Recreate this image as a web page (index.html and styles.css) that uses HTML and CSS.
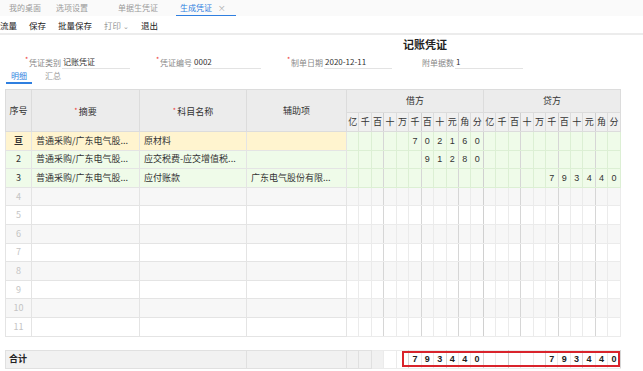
FILE: index.html
```html
<!DOCTYPE html>
<html lang="zh-CN">
<head>
    <meta charset="UTF-8">
    <title>生成凭证</title>
    <link rel="stylesheet" href="styles.css">
</head>
<body>
    <!-- 顶部页签 -->
    <div class="tabs">
        <span class="tab">我的桌面</span>
        <span class="tab">选项设置</span>
        <span class="tab">单据生凭证</span>
        <span class="tab active">生成凭证 <span class="close">×</span></span>
    </div>
    <div class="toolbar">
        <span>流量</span>
        <span>保存</span>
        <span>批量保存</span>
        <span class="disabled">打印 <span class="caret">⌄</span></span>
        <span>退出</span>
    </div>

    <div class="voucher-title">记账凭证</div>

    <div class="form-row">
        <div class="field"><span class="req">*</span><span class="label">凭证类别</span><span class="input">记账凭证</span></div>
        <div class="field"><span class="req">*</span><span class="label">凭证编号</span><span class="input">0002</span></div>
        <div class="field"><span class="req">*</span><span class="label">制单日期</span><span class="input">2020-12-11</span></div>
        <div class="field"><span class="req"></span><span class="label">附单据数</span><span class="input">1</span></div>
    </div>

    <div class="subtabs">
        <span class="subtab active">明细</span>
        <span class="subtab">汇总</span>
    </div>

    <table class="grid">
        <colgroup>
            <col class="c-seq"><col class="c-sum"><col class="c-acc"><col class="c-aux">
            <col span="22" class="c-d">
        </colgroup>
        <thead>
            <tr class="h1">
                <th rowspan="2">序号</th>
                <th rowspan="2"><span class="req">*</span>摘要</th>
                <th rowspan="2"><span class="req">*</span>科目名称</th>
                <th rowspan="2">辅助项</th>
                <th colspan="11" class="side">借方</th>
                <th colspan="11">贷方</th>
            </tr>
            <tr class="h2">
                <th>亿</th><th>千</th><th>百</th><th>十</th><th>万</th><th>千</th><th>百</th><th>十</th><th>元</th><th>角</th><th>分</th>
                <th>亿</th><th>千</th><th>百</th><th>十</th><th>万</th><th>千</th><th>百</th><th>十</th><th>元</th><th>角</th><th>分</th>
            </tr>
        </thead>
        <tbody>
            <tr class="cur">
                <td class="seq"><b>亘</b></td><td>普通采购/广东电气股...</td><td>原材料</td><td></td>
                <td></td><td></td><td></td><td></td><td></td><td>7</td><td>0</td><td>2</td><td>1</td><td>6</td><td>0</td>
                <td></td><td></td><td></td><td></td><td></td><td></td><td></td><td></td><td></td><td></td><td></td>
            </tr>
            <tr class="ok">
                <td class="seq">2</td><td>普通采购/广东电气股...</td><td>应交税费-应交增值税...</td><td></td>
                <td></td><td></td><td></td><td></td><td></td><td></td><td>9</td><td>1</td><td>2</td><td>8</td><td>0</td>
                <td></td><td></td><td></td><td></td><td></td><td></td><td></td><td></td><td></td><td></td><td></td>
            </tr>
            <tr class="ok">
                <td class="seq">3</td><td>普通采购/广东电气股...</td><td>应付账款</td><td>广东电气股份有限...</td>
                <td></td><td></td><td></td><td></td><td></td><td></td><td></td><td></td><td></td><td></td><td></td>
                <td></td><td></td><td></td><td></td><td></td><td>7</td><td>9</td><td>3</td><td>4</td><td>4</td><td>0</td>
            </tr>
            <tr class="empty odd"><td class="seq">4</td><td></td><td></td><td></td><td></td><td></td><td></td><td></td><td></td><td></td><td></td><td></td><td></td><td></td><td></td><td></td><td></td><td></td><td></td><td></td><td></td><td></td><td></td><td></td><td></td><td></td></tr>
            <tr class="empty"><td class="seq">5</td><td></td><td></td><td></td><td></td><td></td><td></td><td></td><td></td><td></td><td></td><td></td><td></td><td></td><td></td><td></td><td></td><td></td><td></td><td></td><td></td><td></td><td></td><td></td><td></td><td></td></tr>
            <tr class="empty odd"><td class="seq">6</td><td></td><td></td><td></td><td></td><td></td><td></td><td></td><td></td><td></td><td></td><td></td><td></td><td></td><td></td><td></td><td></td><td></td><td></td><td></td><td></td><td></td><td></td><td></td><td></td><td></td></tr>
            <tr class="empty"><td class="seq">7</td><td></td><td></td><td></td><td></td><td></td><td></td><td></td><td></td><td></td><td></td><td></td><td></td><td></td><td></td><td></td><td></td><td></td><td></td><td></td><td></td><td></td><td></td><td></td><td></td><td></td></tr>
            <tr class="empty odd"><td class="seq">8</td><td></td><td></td><td></td><td></td><td></td><td></td><td></td><td></td><td></td><td></td><td></td><td></td><td></td><td></td><td></td><td></td><td></td><td></td><td></td><td></td><td></td><td></td><td></td><td></td><td></td></tr>
            <tr class="empty"><td class="seq">9</td><td></td><td></td><td></td><td></td><td></td><td></td><td></td><td></td><td></td><td></td><td></td><td></td><td></td><td></td><td></td><td></td><td></td><td></td><td></td><td></td><td></td><td></td><td></td><td></td><td></td></tr>
            <tr class="empty odd"><td class="seq">10</td><td></td><td></td><td></td><td></td><td></td><td></td><td></td><td></td><td></td><td></td><td></td><td></td><td></td><td></td><td></td><td></td><td></td><td></td><td></td><td></td><td></td><td></td><td></td><td></td><td></td></tr>
            <tr class="empty"><td class="seq">11</td><td></td><td></td><td></td><td></td><td></td><td></td><td></td><td></td><td></td><td></td><td></td><td></td><td></td><td></td><td></td><td></td><td></td><td></td><td></td><td></td><td></td><td></td><td></td><td></td><td></td></tr>
        </tbody>
    </table>

    <!-- 合计行 -->
    <div class="total-wrap">
        <table class="grid total">
            <colgroup>
                <col class="c-left"><col class="c-aux">
                <col span="22" class="c-d">
            </colgroup>
            <tr>
                <td class="sum-label">合计</td><td class="gray"></td>
                <td class="gray"></td><td class="gray"></td><td class="gray"></td><td></td><td></td><td>7</td><td>9</td><td>3</td><td>4</td><td>4</td><td>0</td>
                <td></td><td></td><td></td><td></td><td></td><td>7</td><td>9</td><td>3</td><td>4</td><td>4</td><td>0</td>
            </tr>
        </table>
        <div class="mark"></div>
    </div>
</body>
</html>
```

FILE: styles.css
```css
body {
    margin: 0;
    font-family: "Noto Sans CJK SC", "Noto Sans", sans-serif;
    font-size: 9px;
    color: #333;
    background: #fff;
}
.tabs {
    height: 16px;
    display: flex;
    align-items: stretch;
    background: #fafafa;
    font-size: 8px;
    color: #9a9a9a;
}
.tab {
    line-height: 15px;
    padding: 0 4px;
    border-bottom: 1px solid transparent;
}
.tab:nth-child(1) { margin-left: 5px; }
.tab:nth-child(2) { margin-left: 7px; }
.tab:nth-child(3) { margin-left: 22px; }
.tab:nth-child(4) { margin-left: 14px; }
.tab.active {
    color: #2f7fe0;
    border-bottom: 1px solid #2f7fe0;
    padding-right: 10px;
}
.close {
    color: #aaa;
    margin-left: 4px;
}
.toolbar {
    height: 17px;
    display: flex;
    align-items: center;
    gap: 12px;
    font-size: 8.5px;
    color: #222;
    border-bottom: 2px solid #ececec;
}
.toolbar .disabled { color: #999; }
.caret { font-size: 7px; }

.voucher-title {
    height: 18px;
    line-height: 18px;
    padding-left: 207px;
    text-align: center;
    font-size: 11px;
    font-weight: bold;
    color: #222;
}
.form-row {
    display: flex;
    padding: 1px 0 0 25px;
    height: 15px;
    font-size: 8px;
}
.field {
    display: flex;
    align-items: flex-end;
    width: 131px;
    flex-shrink: 0;
}
.req {
    color: #e33;
    width: 4px;
    font-size: 7px;
    align-self: flex-start;
}
.label {
    color: #888;
    line-height: 13px;
    margin-right: 1px;
}
.input {
    width: 67px;
    height: 13px;
    line-height: 13px;
    padding-left: 1px;
    border-bottom: 1px solid #e3e3e3;
    color: #333;
}
.subtabs {
    display: flex;
    gap: 8px;
    padding-left: 6px;
    font-size: 8px;
    color: #999;
}
.subtab {
    padding: 0 5px;
    height: 13px;
    line-height: 13px;
    border-bottom: 2px solid transparent;
}
.subtab.active {
    color: #2f7fe0;
    border-bottom-color: #2f7fe0;
}

/* 凭证表格 */
.grid {
    border-collapse: collapse;
    table-layout: fixed;
    width: 615px;
    margin: 5px 0 0 5px;
}
.c-seq { width: 26px; }
.c-sum { width: 108px; }
.c-acc { width: 107px; }
.c-aux { width: 100px; }
.c-left { width: 241px; }
.c-d { width: 12.45px; }
.grid th {
    background: #ececec;
    font-weight: normal;
    color: #333;
    border: 1px solid #dcdcdc;
    padding: 0;
    line-height: 12px;
}
.grid th .req {
    display: inline-block;
    width: auto;
    margin-right: 1px;
    vertical-align: 2px;
}
.h1 { height: 23px; }
.h2 { height: 19px; }
.h2 th { background: #f0f0f0; }
.h2 th:nth-child(3), .h2 th:nth-child(6), .h2 th:nth-child(9),
.h2 th:nth-child(14), .h2 th:nth-child(17), .h2 th:nth-child(20) {
    border-right-color: #cfcfcf;
}
.grid tbody tr { height: 18.6px; }
.grid td {
    padding: 0 4px;
    line-height: 12px;
    border: 1px solid #e4e4e4;
    white-space: nowrap;
    overflow: hidden;
}
.grid td:nth-child(n+5) {
    padding: 0;
    text-align: center;
    font-family: "Liberation Sans", Arial, sans-serif;
    border-color: #ebebeb;
}
.grid tbody td:nth-child(7), .grid tbody td:nth-child(10), .grid tbody td:nth-child(13),
.grid tbody td:nth-child(18), .grid tbody td:nth-child(21), .grid tbody td:nth-child(24) {
    border-right-color: #d6d6d6;
}
.grid tbody td:nth-child(15) { border-right: 1px solid #d0d0d0; }
.grid td.seq {
    text-align: center;
    padding: 0;
}
.cur td { background: #fff4cf; }
.cur td:nth-child(n+5), .ok td { background: #effbe9; }
.ok td:nth-child(n+5), .cur td:nth-child(n+5) { border-color: #dcefd4; }
.empty td.seq { color: #c4c4c4; }
.empty.odd td { background: #f7f7f7; }

.total-wrap {
    position: relative;
    margin-top: 13px;
}
.total { margin-top: 0; }
.total tr { height: 17px; }
.total td {
    border-color: #e0e0e0;
    font-weight: bold;
    color: #222;
}
.total td.sum-label, .total td.gray { background: #f1f1f1; }
.total td.sum-label { padding-left: 3px; }
.mark {
    position: absolute;
    left: 402px;
    top: 1px;
    width: 218px;
    height: 16px;
    box-sizing: border-box;
    border: 2px solid #d9232b;
}
```
